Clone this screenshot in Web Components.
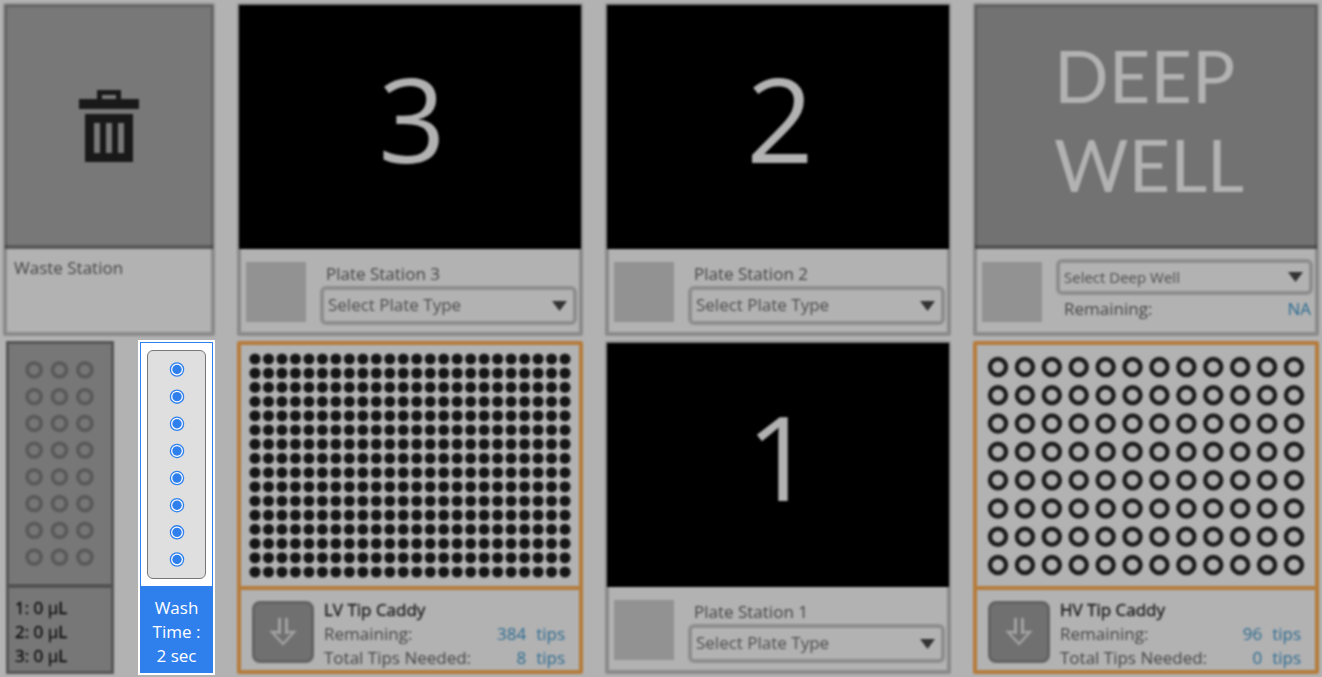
<!DOCTYPE html>
<html lang="en">
<head>
<meta charset="utf-8">
<title>Deck layout</title>
<style>
  html, body { margin: 0; min-height: 100%; background: #b2b2b2; }
  body { font-family: "Open Sans", "Noto Sans", sans-serif; font-size: 17px; line-height: 24px; color: #444; }
</style>
</head>
<body>
<deck-layout>
  <deck-card class="waste"><trash-icon slot="art"></trash-icon><waste-info></waste-info></deck-card>
  <deck-card class="plate"><big-label slot="art">3</big-label><plate-info number="3"></plate-info></deck-card>
  <deck-card class="plate"><big-label slot="art">2</big-label><plate-info number="2"></plate-info></deck-card>
  <deck-card class="deep"><big-label slot="art" small>DEEP<br>WELL</big-label><deep-info></deep-info></deck-card>
  <deck-pair>
    <reagent-card></reagent-card>
    <wash-card></wash-card>
  </deck-pair>
  <deck-card class="tips"><well-grid slot="art" kind="lv"></well-grid><tip-info name="LV Tip Caddy" remaining="384" needed="8"></tip-info></deck-card>
  <deck-card class="plate"><big-label slot="art">1</big-label><plate-info number="1"></plate-info></deck-card>
  <deck-card class="tips"><well-grid slot="art" kind="hv"></well-grid><tip-info name="HV Tip Caddy" remaining="96" needed="0"></tip-info></deck-card>
</deck-layout>
<script>
const define = (name, html) => customElements.define(name, class extends HTMLElement {
  connectedCallback() {
    if (this.shadowRoot) return;
    const root = this.attachShadow({ mode: 'open' });
    root.innerHTML = typeof html === 'function' ? html(this) : html;
  }
});

define('deck-layout', `<style>
  :host { display: grid; box-sizing: border-box; min-height: 100vh; padding: 3px;
    grid-template-columns: 212fr 346fr 346fr 346fr; grid-auto-rows: minmax(330px, 1fr); gap: 5px 22px; }
</style><slot></slot>`);

define('deck-card', `<style>
  :host { display: flex; flex-direction: column; position: relative; min-width: 0; filter: blur(1px);
    --edge: rgba(0,0,0,.22); --line: transparent; }
  :host(.waste) { --art: #787878; --line: rgba(0,0,0,.25); }
  :host(.deep) { --art: #727272; --line: rgba(0,0,0,.25); }
  :host(.plate) { --art: #000; }
  :host(.tips) { --art: transparent; --edge: #b57c3c; --line: #b57c3c; }
  .art { flex: 1; display: flex; align-items: center; justify-content: center; margin: 2px 2px 0;
    background: var(--art); border-bottom: 4px solid var(--line); }
  :host(.tips) .art { margin: 0; align-items: stretch; }
  .info { height: 87px; }
  :host(.tips) .info { height: 84px; }
  :host::after { content: ""; position: absolute; inset: 0; border: 4px solid var(--edge); border-radius: 2px; pointer-events: none; }
</style><div class="art"><slot name="art"></slot></div><div class="info"><slot></slot></div>`);

define('big-label', `<style>
  :host { display: block; font-size: 118px; line-height: 160px; color: #b2b2b2; padding: 0 0 14px 4px; }
  :host([small]) { font-family: Lato, "Open Sans", sans-serif; font-size: 72px; line-height: 89px;
    padding: 0 0 10px; width: 184px; white-space: nowrap; }
</style><slot></slot>`);

define('trash-icon', `<style>:host { display: block; padding-top: 2px; } svg { display: block; }</style>
<svg width="60" height="72" viewBox="0 0 60 72" fill="#191919" fill-rule="evenodd" role="img" aria-label="Waste">
  <path d="M18 0H42V9H60V19H0V9H18ZM23 5V9H37V5Z"/>
  <path d="M6 24H54V72H6ZM15 33V63H21V33ZM27 33V63H33V33ZM39 33V63H45V33Z"/>
</svg>`);

define('waste-info', `<style>:host { display: block; padding: 7px 11px; }</style>Waste Station`);

const swatch = '.swatch { flex: none; width: 60px; height: 60px; background: #929292; }';

define('drop-down', el => `<style>
  :host { display: grid; align-items: center; height: 39px; font-size: 17px; }
  :host([compact]) { height: 36px; font-size: 15px; }
  select { grid-area: 1 / 1; appearance: none; box-sizing: border-box; width: 100%; height: 100%; margin: 0;
    padding: 0 28px 2px 4px; border: 4px solid #8e8e8e; border-radius: 6px; background: none; color: #4c4c4c; font: inherit; }
  :host([compact]) select { padding-bottom: 0; }
  svg { grid-area: 1 / 1; justify-self: end; margin-right: 10px; pointer-events: none; }
</style>
<select aria-label="${el.getAttribute('label')}"><option>${el.getAttribute('text')}</option></select>
<svg width="15" height="10" viewBox="0 0 15 10"><path d="M0 0H15L7.500 10Z" fill="#333"/></svg>`);

define('plate-info', el => `<style>
  :host { display: flex; gap: 14px; padding: 13px 6px 0 9px; }
  ${swatch}
  .fields { flex: 1; min-width: 0; }
  .name { padding-left: 6px; }
</style>
<div class="swatch"></div>
<div class="fields"><div class="name">Plate Station ${el.getAttribute('number')}</div>
<drop-down label="Plate Station ${el.getAttribute('number')}" text="Select Plate Type"></drop-down></div>`);

define('deep-info', `<style>
  :host { display: flex; gap: 14px; padding: 10px 6px 0 9px; }
  ${swatch}
  .swatch { margin-top: 3px; }
  .fields { flex: 1; min-width: 0; }
  .row { display: flex; justify-content: space-between; padding: 2px 2px 0 8px; }
  .value { color: #2b6b91; }
</style>
<div class="swatch"></div>
<div class="fields"><drop-down compact label="Deep well" text="Select Deep Well"></drop-down>
<div class="row"><span>Remaining:</span><span class="value">NA</span></div></div>`);

define('tip-info', el => `<style>
  :host { display: flex; gap: 10px; padding: 8px 18px 0 15px; }
  button { flex: none; display: grid; place-items: center; width: 62px; height: 62px; margin-top: 3px; padding: 0;
    border: 3px solid #636363; border-radius: 8px; background: #707070; }
  .fields { flex: 1; min-width: 0; }
  .name { color: #1c1c1c; -webkit-text-stroke: 0.400px; }
  .row { display: flex; }
  .row span:first-child { flex: 1; white-space: nowrap; }
  .value { color: #2b6b91; }
  .unit { margin-left: 10px; }
</style>
<button aria-label="Load tips"><svg width="32" height="32" viewBox="0 0 32 32" fill="none" stroke="#a2a2a2" stroke-width="3">
  <path d="M12.500 2V18M19.500 2V18"/><path d="M11 16H5L16 28L27 16H21" stroke-width="2.500"/></svg></button>
<div class="fields"><div class="name">${el.getAttribute('name')}</div>
<div class="row"><span>Remaining:</span><span class="value">${el.getAttribute('remaining')}</span><span class="value unit">tips</span></div>
<div class="row"><span>Total Tips Needed:</span><span class="value">${el.getAttribute('needed')}</span><span class="value unit">tips</span></div></div>`);

// Well arrays: box size, first centre, last centre, counts and the drawing of one well.
const ARRAYS = {
  lv: { box: [346, 245], from: [18, 18], to: [328, 231], n: [24, 16], well: '<circle r="5.6" fill="#151515"/>' },
  hv: { box: [346, 245], from: [25, 26], to: [321, 224], n: [12, 8], well: '<circle r="8" fill="none" stroke="#1e1e1e" stroke-width="4.500"/>' },
  reagent: { box: [108, 244], from: [28, 29], to: [79, 217], n: [3, 8], well: '<circle r="7" fill="none" stroke="#5a5a5a" stroke-width="4"/>' },
  wash: { box: [57, 226], from: [29, 18], to: [29, 208], n: [1, 8],
    well: '<circle r="6.600" fill="#fff" stroke="#2f80ed" stroke-width="1.300"/><circle r="4.700" fill="#2f80ed"/>' }
};
define('well-grid', el => {
  const a = ARRAYS[el.getAttribute('kind')];
  const at = (k, i) => a.n[k] < 2 ? a.from[k] : a.from[k] + (a.to[k] - a.from[k]) * i / (a.n[k] - 1);
  let wells = '';
  for (let r = 0; r < a.n[1]; r++) for (let c = 0; c < a.n[0]; c++)
    wells += `<g transform="translate(${at(0, c)} ${at(1, r)})">${a.well}</g>`;
  return `<style>:host { display: block; flex: 1; contain: size; } svg { display: block; width: 100%; height: 100%; }</style>
    <svg viewBox="0 0 ${a.box[0]} ${a.box[1]}">${wells}</svg>`;
});

define('deck-pair', `<style>
  :host { display: grid; grid-template-columns: 108fr 77fr; column-gap: 24px; padding-left: 3px; min-width: 0; }
</style><slot></slot>`);

define('reagent-card', `<style>
  :host { display: flex; flex-direction: column; box-sizing: border-box; background: #777; filter: blur(1px);
    position: relative; color: #0c0c0c; }
  :host::after { content: ""; position: absolute; inset: 0; border: 3px solid #565656; }
  .art { flex: 1; display: flex; border-bottom: 4px solid #525252; }
  .info { height: 86px; box-sizing: border-box; padding: 8px 9px; -webkit-text-stroke: 0.400px; }
</style><div class="art"><well-grid kind="reagent"></well-grid></div>
<div class="info"><div>1: 0 µL</div><div>2: 0 µL</div><div>3: 0 µL</div></div>`);

define('wash-card', `<style>
  :host { display: flex; flex-direction: column; margin: 1px 2px; border: 1px solid #2f80ed; background: #fff;
    box-shadow: 0 0 0 2px #fff; }
  .art { flex: 1; display: flex; padding: 7px 6px; }
  .panel { flex: 1; display: flex; border: 1px solid #777; border-radius: 6px; background: #dfdfdf; }
  .info { height: 86px; box-sizing: border-box; padding: 10px 4px; background: #2f80ed; color: #fff;
    text-align: center; }
</style><div class="art"><div class="panel"><well-grid kind="wash"></well-grid></div></div>
<div class="info"><div>Wash</div><div>Time :</div><div>2 sec</div></div>`);
</script>
</body>
</html>
